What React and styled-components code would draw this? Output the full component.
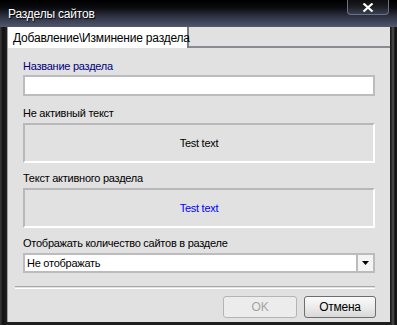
import React from "react";
import styled, { createGlobalStyle } from "styled-components";

const GlobalStyle = createGlobalStyle`
  html, body { margin: 0; padding: 0; background: #1a1a1a; }
  body { font-family: "Liberation Sans", Arial, sans-serif; font-size: 11px; letter-spacing: -0.25px; }
`;

const Window = styled.div`
  width: 397px;
  height: 325px;
  box-sizing: border-box;
  display: flex;
  flex-direction: column;
  background: linear-gradient(90deg, #3c3c3c 0px, #101010 3px, #1e1e1e 6px, #1e1e1e 391px, #505050 393px, #141414 395px);
  padding: 0 7px 3px 7px;
  position: relative;
`;

const TitleBar = styled.div`
  height: 27px;
  margin: 0 -7px;
  padding: 1px 8px 0 8px;
  display: flex;
  align-items: center;
  box-sizing: border-box;
  background: linear-gradient(180deg, #000 0px, #0b0c10 8px, #2c3040 16px, #4d5469 26px, #555b70 27px);
  color: #fff;
  font-size: 12px;
  letter-spacing: -0.2px;
  text-shadow: 1px 1px 1px #000;
`;

const CloseButton = styled.div`
  position: absolute;
  top: 0;
  right: 8px;
  width: 42px;
  height: 15px;
  display: flex;
  align-items: center;
  justify-content: center;
  background: linear-gradient(180deg, #0e0e10 0px, #1a1b20 6px, #3e4456 15px);
  border: 1px solid #6c7184;
  border-top: none;
  border-radius: 0 0 4px 4px;
  box-sizing: border-box;
`;

const Client = styled.div`
  flex: 1;
  background: #e1e1e1;
  display: flex;
  flex-direction: column;
  border-left: 1px solid #a0a0a0;
`;

const TabStrip = styled.div`
  height: 21px;
  display: flex;
  align-items: stretch;
`;

const Tab = styled.div`
  width: 174px;
  background: #fff;
  border-right: 2px solid #7c7c84;
  display: flex;
  align-items: center;
  padding-left: 5px;
  font-size: 12px;
  letter-spacing: -0.2px;
  white-space: nowrap;
  color: #000;
`;

const TabFill = styled.div`
  flex: 1;
  border-bottom: 2px solid #8a8a90;
`;

const Page = styled.div`
  flex: 1;
  display: flex;
  flex-direction: column;
  padding: 11px 15px 0 15px;
`;

const Group = styled.div`
  display: flex;
  flex-direction: column;
  gap: ${(p) => p.$gap || 3}px;
  margin-top: ${(p) => p.$mt || 0}px;
`;

const Label = styled.div`
  height: 14px;
  line-height: 14px;
  color: ${(p) => p.$color || "#000"};
  white-space: nowrap;
`;

const TextInput = styled.div`
  height: 21px;
  box-sizing: border-box;
  background: #fff;
  border: 2px solid #bcbcbc;
`;

const Preview = styled.div`
  height: 40px;
  box-sizing: border-box;
  border-top: 2px solid #b8b8b8;
  border-left: 2px solid #b8b8b8;
  border-right: 2px solid #fff;
  border-bottom: 2px solid #fff;
  display: flex;
  align-items: center;
  justify-content: center;
  color: ${(p) => p.$color || "#000"};
`;

const Combo = styled.div`
  height: 20px;
  box-sizing: border-box;
  background: #fff;
  border: 2px solid #bcbcbc;
  display: flex;
  align-items: center;
  padding-left: 2px;
`;

const ComboText = styled.div`
  flex: 1;
`;

const ComboArrow = styled.div`
  width: 17px;
  height: 16px;
  box-sizing: border-box;
  border-left: 2px solid #bcbcbc;
  background: #f4f4f4;
  display: flex;
  align-items: center;
  justify-content: center;
`;

const Separator = styled.div`
  margin: 13px 0 0 -8px;
  height: 1px;
  border-top: 1px solid #a8a8a8;
  border-bottom: 1px solid #fff;
`;

const ButtonRow = styled.div`
  display: flex;
  justify-content: flex-end;
  gap: 7px;
  margin-top: 7px;
  margin-right: -1px;
`;

const Button = styled.div`
  width: ${(p) => p.$w}px;
  height: 22px;
  box-sizing: border-box;
  border-radius: 3px;
  display: flex;
  align-items: center;
  justify-content: center;
  font-size: 12px;
  border: 1px solid ${(p) => (p.$disabled ? "#b4b4b4" : "#6e6e6e")};
  background: ${(p) =>
    p.$disabled ? "#ececec" : "linear-gradient(180deg, #fafafa 0%, #ececec 50%, #d8d8d8 100%)"};
  color: ${(p) => (p.$disabled ? "#a4a4a4" : "#000")};
`;

export default function App() {
  return (
    <>
      <GlobalStyle />
      <Window>
        <TitleBar>Разделы сайтов</TitleBar>
        <CloseButton>
          <svg width="12" height="9" viewBox="0 0 12 9">
            <path d="M1.5 0.5 L10.5 8.5 M10.5 0.5 L1.5 8.5" stroke="#fff" strokeWidth="2.2" />
          </svg>
        </CloseButton>
        <Client>
          <TabStrip>
            <Tab>Добавление\Изминение раздела</Tab>
            <TabFill />
          </TabStrip>
          <Page>
            <Group $gap={2}>
              <Label $color="#000080">Название раздела</Label>
              <TextInput />
            </Group>
            <Group $mt={10}>
              <Label>Не активный текст</Label>
              <Preview>Test text</Preview>
            </Group>
            <Group $mt={8}>
              <Label>Текст активного раздела</Label>
              <Preview $color="#0000ff">Test text</Preview>
            </Group>
            <Group $mt={8}>
              <Label>Отображать количество сайтов в разделе</Label>
              <Combo>
                <ComboText>Не отображать</ComboText>
                <ComboArrow>
                  <svg width="7" height="4" viewBox="0 0 7 4">
                    <path d="M0 0 H7 L3.5 4 Z" fill="#000" />
                  </svg>
                </ComboArrow>
              </Combo>
            </Group>
            <Separator />
            <ButtonRow>
              <Button $w={74} $disabled>OK</Button>
              <Button $w={72}>Отмена</Button>
            </ButtonRow>
          </Page>
        </Client>
      </Window>
    </>
  );
}
